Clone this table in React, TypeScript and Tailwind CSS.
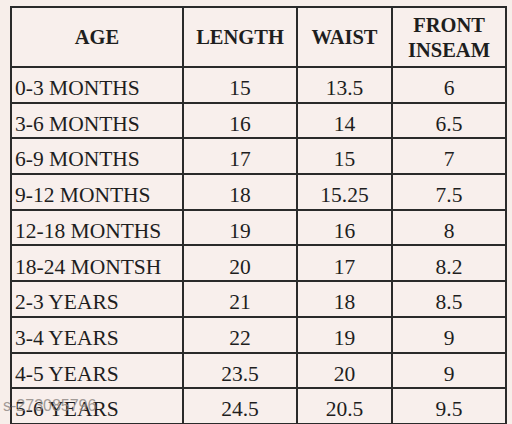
import React from "react";

const rows: [string, string, string, string][] = [
  ["0-3 MONTHS", "15", "13.5", "6"],
  ["3-6 MONTHS", "16", "14", "6.5"],
  ["6-9 MONTHS", "17", "15", "7"],
  ["9-12 MONTHS", "18", "15.25", "7.5"],
  ["12-18 MONTHS", "19", "16", "8"],
  ["18-24 MONTSH", "20", "17", "8.2"],
  ["2-3 YEARS", "21", "18", "8.5"],
  ["3-4 YEARS", "22", "19", "9"],
  ["4-5 YEARS", "23.5", "20", "9"],
  ["5-6 YEARS", "24.5", "20.5", "9.5"],
];

export default function App() {
  return (
    <div className="relative w-[512px] h-[424px] overflow-hidden bg-[#f7eeea] pt-[6px] pl-[10px] text-[#1e1e1e] font-['Liberation_Serif',serif]">
      <div className="grid grid-cols-[172px_114px_95px_114px] grid-rows-[60px_repeat(10,35.7px)] w-[497px] border-l-2 border-t-2 border-[#2a2a2a] bg-[#f8efec] font-['Liberation_Serif',serif]">
        {["AGE", "LENGTH", "WAIST"].map((h) => (
          <div
            key={h}
            className="flex items-center justify-center border-r-2 border-b-2 border-[#2a2a2a] font-['Liberation_Serif',serif] text-[20.5px] font-bold leading-none pt-[1px]"
          >
            {h}
          </div>
        ))}
        <div className="flex flex-col items-center justify-center border-r-2 border-b-2 border-[#2a2a2a] font-['Liberation_Serif',serif] text-[20.5px] font-bold leading-[25px] pt-[1px]">
          <span>FRONT</span>
          <span>INSEAM</span>
        </div>
        {rows.map((r) => (
          <React.Fragment key={r[0]}>
            <div className="flex items-center border-r-2 border-b-2 border-[#2a2a2a] pl-[3px] font-['Liberation_Serif',serif] text-[21.5px] leading-none pt-[8px] whitespace-nowrap">
              {r[0]}
            </div>
            {r.slice(1).map((v, i) => (
              <div
                key={i}
                className="flex items-center justify-center border-r-2 border-b-2 border-[#2a2a2a] font-['Liberation_Serif',serif] text-[21.5px] leading-none pt-[8px]"
              >
                {v}
              </div>
            ))}
          </React.Fragment>
        ))}
      </div>
      <div className="absolute left-[3px] top-[398px] text-[16px] leading-none text-[#8a8480]/80 font-['Liberation_Sans',sans-serif]">
        s-273085796
      </div>
    </div>
  );
}
